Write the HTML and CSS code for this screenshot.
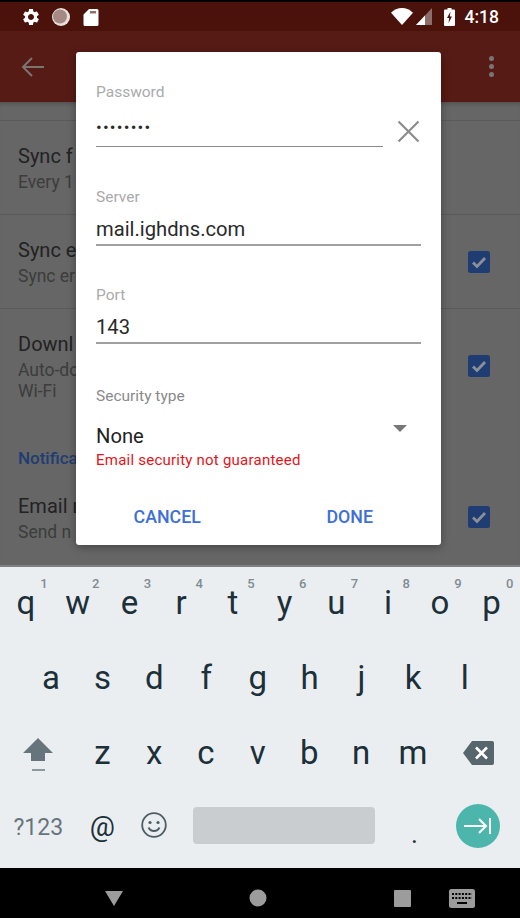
FILE: index.html
```html
<!DOCTYPE html>
<html lang="en">
<head>
  <meta charset="UTF-8">
  <meta name="viewport" content="width=device-width, initial-scale=1.0">
  <title>Account settings</title>
  <link rel="stylesheet" href="styles.css">
</head>
<body>
  <div class="phone">
    <!-- status bar -->
    <div class="statusbar">
      <svg class="st-gear" width="20" height="20" viewBox="0 0 24 24"><path fill="#fff" d="M19.14 12.94c.04-.3.06-.61.06-.94 0-.32-.02-.64-.07-.94l2.03-1.58c.18-.14.23-.41.12-.61l-1.92-3.32c-.12-.22-.37-.29-.59-.22l-2.39.96c-.5-.38-1.03-.7-1.62-.94l-.36-2.54c-.04-.24-.24-.41-.48-.41h-3.84c-.24 0-.43.17-.47.41l-.36 2.54c-.59.24-1.13.57-1.62.94l-2.39-.96c-.22-.08-.47 0-.59.22L2.74 8.87c-.12.21-.08.47.12.61l2.03 1.58c-.05.3-.09.63-.09.94s.02.64.07.94l-2.03 1.58c-.18.14-.23.41-.12.61l1.92 3.32c.12.22.37.29.59.22l2.39-.96c.5.38 1.03.7 1.62.94l.36 2.54c.05.24.24.41.48.41h3.84c.24 0 .44-.17.47-.41l.36-2.54c.59-.24 1.13-.56 1.62-.94l2.39.96c.22.08.47 0 .59-.22l1.92-3.32c.12-.22.07-.47-.12-.61l-2.01-1.58zM12 15.6c-1.98 0-3.6-1.62-3.6-3.6s1.62-3.6 3.6-3.6 3.6 1.62 3.6 3.6-1.62 3.6-3.6 3.6z"/></svg>
      <svg class="st-dot" width="20" height="20" viewBox="0 0 20 20"><circle cx="10" cy="10" r="9" fill="#e8e0dc"/><circle cx="9" cy="9.500" r="7" fill="#a58a84"/></svg>
      <svg class="st-sd" width="16" height="18" viewBox="0 0 16 18"><path fill="#fff" d="M6 1h8a1.500 1.500 0 0 1 1.500 1.500v14a1.500 1.500 0 0 1-1.500 1.500H2a1.500 1.500 0 0 1-1.500-1.500V6.500z"/><path stroke="#4a120b" stroke-width="1.200" d="M8 3v2.500M10 3v2.500M12 3v2.500"/></svg>
      <span class="st-space"></span>
      <svg class="st-wifi" width="22" height="17" viewBox="0 0 22 17"><path fill="#fff" d="M11 17 0 4.800C3 1.900 6.800 0 11 0s8 1.900 11 4.800z"/></svg>
      <svg class="st-signal" width="16" height="17" viewBox="0 0 16 17"><path fill="#8d6d68" d="M16 0v17H0z"/><path fill="#fff" d="M9 7.500V17H0z"/></svg>
      <svg class="st-batt" width="11" height="18" viewBox="0 0 11 18"><path fill="#fff" d="M3.500 0h4v1.500H10a1 1 0 0 1 1 1V17a1 1 0 0 1-1 1H1a1 1 0 0 1-1-1V2.500a1 1 0 0 1 1-1h2.500z"/><path fill="#4a120b" d="M6.500 3.500 3 10h2.200l-.7 5L8 8.500H5.800z"/></svg>
      <span class="st-time">4:18</span>
    </div>

    <!-- toolbar -->
    <div class="toolbar">
      <svg width="24" height="24" viewBox="0 0 24 24"><path fill="none" stroke="#7a7472" stroke-width="2" d="M23 12H2M11 3l-9 9 9 9"/></svg>
      <span class="st-space"></span>
      <span class="more"><i></i><i></i><i></i></span>
    </div>

    <!-- settings list behind the dialog -->
    <div class="list">
      <div class="row row-first">
        <div class="row-title">Sync f</div>
        <div class="row-sub">Every 1</div>
      </div>
      <div class="row">
        <div class="row-title">Sync e</div>
        <div class="row-sub">Sync er</div>
        <svg class="check" width="22" height="22" viewBox="0 0 22 22"><rect width="22" height="22" rx="2.500" fill="#1f3d72"/><path fill="none" stroke="#8b8f96" stroke-width="2.800" d="M5 11.500l4 4 8-8.500"/></svg>
      </div>
      <div class="row row-plain">
        <div class="row-title">Downl</div>
        <div class="row-sub">Auto-do<br>Wi-Fi</div>
        <svg class="check check-low" width="22" height="22" viewBox="0 0 22 22"><rect width="22" height="22" rx="2.500" fill="#1f3d72"/><path fill="none" stroke="#8b8f96" stroke-width="2.800" d="M5 11.500l4 4 8-8.500"/></svg>
      </div>
      <div class="section">Notifica</div>
      <div class="row row-plain">
        <div class="row-title">Email n</div>
        <div class="row-sub">Send n</div>
        <svg class="check check-last" width="22" height="22" viewBox="0 0 22 22"><rect width="22" height="22" rx="2.500" fill="#1f3d72"/><path fill="none" stroke="#8b8f96" stroke-width="2.800" d="M5 11.500l4 4 8-8.500"/></svg>
      </div>
    </div>

    <!-- keyboard -->
    <div class="keyboard">
      <div class="kb-row">
        <div class="key">q<span class="digit">1</span></div>
        <div class="key">w<span class="digit">2</span></div>
        <div class="key">e<span class="digit">3</span></div>
        <div class="key">r<span class="digit">4</span></div>
        <div class="key">t<span class="digit">5</span></div>
        <div class="key">y<span class="digit">6</span></div>
        <div class="key">u<span class="digit">7</span></div>
        <div class="key">i<span class="digit">8</span></div>
        <div class="key">o<span class="digit">9</span></div>
        <div class="key">p<span class="digit">0</span></div>
      </div>
      <div class="kb-row kb-row-mid">
        <div class="key">a</div>
        <div class="key">s</div>
        <div class="key">d</div>
        <div class="key">f</div>
        <div class="key">g</div>
        <div class="key">h</div>
        <div class="key">j</div>
        <div class="key">k</div>
        <div class="key">l</div>
      </div>
      <div class="kb-row">
        <div class="key key-wide">
          <svg class="shift" width="30" height="42" viewBox="0 0 30 42"><path fill="#66757c" d="M15 0 30 15h-8v8H8v-8H0z"/><rect x="9" y="31" width="13" height="2" fill="#8d999f"/></svg>
        </div>
        <div class="key">z</div>
        <div class="key">x</div>
        <div class="key">c</div>
        <div class="key">v</div>
        <div class="key">b</div>
        <div class="key">n</div>
        <div class="key">m</div>
        <div class="key key-back">
          <svg class="back" width="31" height="24" viewBox="0 0 31 24"><path fill="#57656c" d="M9 0h20a2 2 0 0 1 2 2v20a2 2 0 0 1-2 2H9L0 12z"/><path fill="none" stroke="#fff" stroke-width="2.600" d="M13 6.500l11 11M24 6.500l-11 11"/></svg>
        </div>
      </div>
      <div class="kb-row">
        <div class="key key-wide key-sym">?123</div>
        <div class="key key-at">@</div>
        <div class="key key-smile">
          <svg class="smile" width="26" height="26" viewBox="0 0 26 26"><circle cx="13" cy="13" r="11.800" fill="none" stroke="#4c5d64" stroke-width="1.800"/><circle cx="9" cy="10.500" r="1.600" fill="#4c5d64"/><circle cx="17" cy="10.500" r="1.600" fill="#4c5d64"/><path fill="none" stroke="#4c5d64" stroke-width="1.800" d="M7.500 15.500c1.200 2.500 3 3.500 5.500 3.500s4.300-1 5.500-3.500"/></svg>
        </div>
        <div class="key key-space"><span class="spacebar"></span></div>
        <div class="key key-dot">.</div>
        <div class="key key-enter">
          <span class="enter">
            <svg width="28" height="18" viewBox="0 0 28 18"><path fill="none" stroke="#fff" stroke-width="2" d="M0 9h22M15 2l7 7-7 7M26 1v16"/></svg>
          </span>
        </div>
      </div>
    </div>

    <!-- nav bar -->
    <div class="navbar">
      <svg class="nav-back" width="18" height="15" viewBox="0 0 18 15"><path fill="#9c9c9c" d="M0 0h18L9 15z"/></svg>
      <svg class="nav-home" width="18" height="18" viewBox="0 0 18 18"><circle cx="9" cy="9" r="8.500" fill="#9c9c9c"/></svg>
      <svg class="nav-recent" width="17" height="17" viewBox="0 0 17 17"><rect width="17" height="17" rx="1" fill="#9c9c9c"/></svg>
      <svg class="nav-kb" width="26" height="19" viewBox="0 0 26 19"><rect width="26" height="19" rx="2.500" fill="#9c9c9c"/><path stroke="#000" stroke-width="2" stroke-dasharray="2 1.300" d="M3 5h20M3 9h20"/><rect x="8" y="13" width="10" height="2" fill="#000"/></svg>
    </div>

    <!-- dialog -->
    <div class="dialog">
      <div class="field field-pass">
        <div class="field-label">Password</div>
        <div class="pass-row">
          <div class="pass-value">••••••••</div>
          <svg class="clear" width="23" height="23" viewBox="0 0 23 23"><path fill="none" stroke="#8c8c8c" stroke-width="2.200" d="M1.500 1.500l20 20M21.500 1.500l-20 20"/></svg>
        </div>
      </div>
      <div class="field">
        <div class="field-label">Server</div>
        <div class="field-value">mail.ighdns.com</div>
      </div>
      <div class="field">
        <div class="field-label">Port</div>
        <div class="field-value">143</div>
      </div>
      <div class="field field-security">
        <div class="field-label label-dark">Security type</div>
        <div class="select-row">
          <span class="select-value">None</span>
          <span class="caret"></span>
        </div>
        <div class="field-error">Email security not guaranteed</div>
      </div>
      <div class="actions">
        <button class="action">CANCEL</button>
        <button class="action">DONE</button>
      </div>
    </div>
  </div>
</body>
</html>
```

FILE: styles.css
```css
* {
  box-sizing: border-box;
}

html, body {
  margin: 0;
  padding: 0;
  background: #000;
}

body {
  font-family: Roboto, "Liberation Sans", sans-serif;
}

.phone {
  position: relative;
  width: 520px;
  height: 918px;
  overflow: hidden;
  display: flex;
  flex-direction: column;
}

.st-space {
  flex: 1;
}

/* status bar */
.statusbar {
  height: 31px;
  flex: none;
  display: flex;
  align-items: center;
  padding: 0 21px;
  background: #4a120b;
  border-top: 2px solid #000;
}

.st-dot {
  margin-left: 10px;
}

.st-sd {
  margin-left: 12px;
}

.st-signal {
  margin-left: 3px;
  margin-right: 12px;
}

.st-time {
  margin-left: 10px;
  color: #fff;
  font-size: 17.500px;
  font-weight: 500;
}

/* toolbar */
.toolbar {
  height: 71px;
  flex: none;
  display: flex;
  align-items: center;
  padding: 0 26px 0 21px;
  background: #571b15;
}

.more {
  display: flex;
  flex-direction: column;
  gap: 3px;
}

.more i {
  display: block;
  width: 5px;
  height: 5px;
  border-radius: 50%;
  background: #7a7472;
}

/* settings list */
.list {
  flex: 1;
  overflow: hidden;
  background: #666;
  color: #222;
  padding-top: 18px;
  box-shadow: inset 0 5px 4px -3px rgba(0, 0, 0, 0.2);
}

.row {
  position: relative;
  height: 94px;
  padding: 21px 0 0 18px;
  border-bottom: 1px solid #5a5a5a;
}

.row-first {
  border-top: 1px solid #5a5a5a;
  height: 95px;
}

.row-plain {
  height: auto;
  border-bottom: none;
}

.row-title {
  font-size: 20px;
  line-height: 28px;
}

.row-sub {
  margin-top: 2px;
  font-size: 17.500px;
  line-height: 21px;
  color: #3c3c3c;
}

.check {
  position: absolute;
  right: 30px;
  top: 36px;
}

.check-low {
  top: 46px;
}

.check-last {
  top: 35px;
}

.section {
  margin-top: 44px;
  padding-left: 18px;
  font-size: 17px;
  font-weight: 500;
  line-height: 24px;
  color: #1f3d72;
}

.section + .row {
  margin-top: 1px;
}

/* keyboard */
.keyboard {
  height: 303px;
  flex: none;
  background: #ebeef1;
  border-top: 2px solid #808080;
  color: #1c3039;
}

.kb-row {
  height: 75px;
  display: flex;
}

.kb-row-mid {
  padding-left: 25px;
}

.key {
  position: relative;
  width: 51.750px;
  flex: none;
  display: flex;
  align-items: center;
  justify-content: center;
  padding-bottom: 4px;
  font-size: 33px;
}

.digit {
  position: absolute;
  top: 9px;
  right: 4px;
  font-size: 13px;
  font-weight: 500;
  color: #7f8c92;
}

.key-wide {
  width: 76.500px;
}

.key-back {
  width: 78.500px;
}

.shift {
  margin-top: 12px;
}

.key-sym {
  font-size: 23px;
  color: #66757c;
}

.key-at {
  font-size: 28px;
  padding-bottom: 7px;
}

.key-smile {
  padding-bottom: 9px;
}

.key-space {
  width: 208.500px;
  padding-bottom: 8px;
}

.spacebar {
  display: block;
  width: 182px;
  height: 37px;
  border-radius: 4px;
  background: #c9cdd0;
}

.key-dot {
  font-size: 26px;
  padding-top: 12px;
}

.key-enter {
  width: 76px;
  padding-bottom: 7px;
}

.enter {
  width: 44px;
  height: 44px;
  border-radius: 50%;
  background: #4db6ac;
  display: flex;
  align-items: center;
  justify-content: center;
}

/* nav bar */
.navbar {
  height: 50px;
  flex: none;
  display: flex;
  align-items: center;
  padding: 10px 0 0 105px;
  background: #000;
}

.nav-home {
  margin-left: 126px;
}

.nav-recent {
  margin-left: 127px;
}

.nav-kb {
  margin-left: 38px;
}

/* dialog */
.dialog {
  position: absolute;
  left: 76px;
  top: 52px;
  width: 365px;
  height: 493px;
  padding-top: 30px;
  background: #fff;
  border-radius: 3px;
  box-shadow: 0 2px 8px rgba(0, 0, 0, 0.35);
}

.field {
  margin: 0 20px 39px;
}

.field-pass {
  margin-bottom: 40px;
}

.field-label {
  font-size: 15.500px;
  line-height: 20px;
  color: #aaa;
}

.label-dark {
  color: #8a8a8a;
}

.field-value {
  margin-top: 7px;
  height: 32px;
  font-size: 20.200px;
  line-height: 30px;
  color: #2a2a2a;
  border-bottom: 2px solid #a0a0a0;
}

.pass-row {
  display: flex;
  align-items: flex-end;
  margin-top: 9px;
}

.pass-value {
  flex: 1;
  height: 36px;
  font-size: 17px;
  line-height: 33px;
  letter-spacing: 1.200px;
  color: #2a2a2a;
  border-bottom: 1.500px solid #8a8a8a;
}

.clear {
  margin: 0 1px 4px 14px;
}

.field-security {
  margin-top: 42px;
  margin-bottom: 0;
}

.select-row {
  display: flex;
  justify-content: space-between;
  margin-top: 15px;
}

.select-value {
  font-size: 20.200px;
  line-height: 30px;
  color: #222;
}

.caret {
  width: 0;
  height: 0;
  margin: 4px 14px 0 0;
  border-left: 7px solid transparent;
  border-right: 7px solid transparent;
  border-top: 7px solid #777;
}

.field-error {
  margin-top: -1px;
  font-size: 15px;
  line-height: 20px;
  letter-spacing: 0.230px;
  color: #e6131a;
}

.actions {
  display: flex;
  margin-top: 17px;
}

.action {
  flex: 1;
  height: 59px;
  border: none;
  background: none;
  font-family: inherit;
  font-size: 17.800px;
  font-weight: 500;
  color: #3d6fd6;
}
```
